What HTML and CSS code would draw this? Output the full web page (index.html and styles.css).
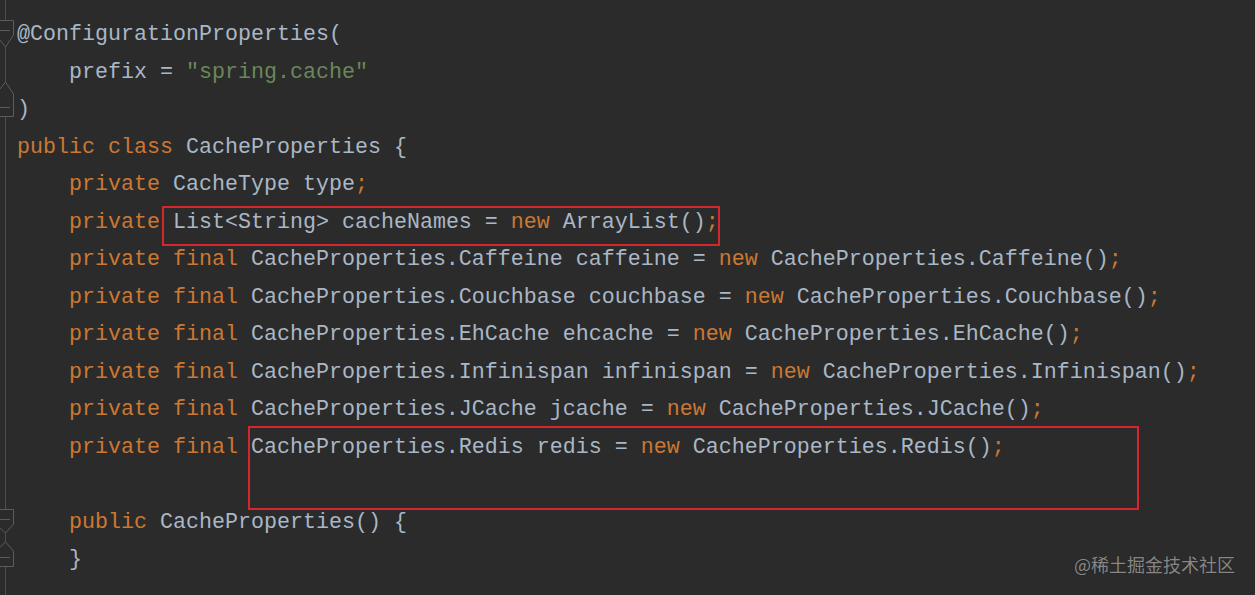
FILE: index.html
```html
<!DOCTYPE html>
<html lang="en">

<head>
    <meta charset="UTF-8">
    <title>CacheProperties.java</title>
    <link rel="stylesheet" href="styles.css">
</head>

<body>

    <div class="editor">
        <div class="gutter">
            <svg width="17" height="595" viewBox="0 0 17 595">
                <line x1="5.5" y1="0" x2="5.5" y2="595" class="guide" />
                <!-- fold start: annotation -->
                <path d="M-4 20.5 H13.5 V35 L5.5 47 L-4 35 Z" class="fold" />
                <line x1="0" y1="30.5" x2="10" y2="30.5" class="fold-minus" />
                <!-- fold end: annotation -->
                <path d="M-4 116.5 H13.5 V94 L5.5 82 L-4 94 Z" class="fold" />
                <line x1="0" y1="107.5" x2="10" y2="107.5" class="fold-minus" />
                <!-- fold start: constructor -->
                <path d="M-4 509.5 H13.5 V524 L5.5 533 L-4 524 Z" class="fold" />
                <line x1="0" y1="519.5" x2="10" y2="519.5" class="fold-minus" />
                <!-- fold end: constructor -->
                <path d="M-4 566.5 H13.5 V551 L5.5 542 L-4 551 Z" class="fold" />
                <line x1="0" y1="557.5" x2="10" y2="557.5" class="fold-minus" />
            </svg>
        </div>

        <div class="code">
            <div class="line">@ConfigurationProperties(</div>
            <div class="line">    prefix = <span class="str">"spring.cache"</span></div>
            <div class="line">)</div>
            <div class="line"><span class="kw">public class</span> CacheProperties {</div>
            <div class="line">    <span class="kw">private</span> CacheType type<span class="kw">;</span></div>
            <div class="line">    <span class="kw">private</span> List&lt;String&gt; cacheNames = <span class="kw">new</span> ArrayList()<span class="kw">;</span></div>
            <div class="line">    <span class="kw">private final</span> CacheProperties.Caffeine caffeine = <span class="kw">new</span> CacheProperties.Caffeine()<span class="kw">;</span></div>
            <div class="line">    <span class="kw">private final</span> CacheProperties.Couchbase couchbase = <span class="kw">new</span> CacheProperties.Couchbase()<span class="kw">;</span></div>
            <div class="line">    <span class="kw">private final</span> CacheProperties.EhCache ehcache = <span class="kw">new</span> CacheProperties.EhCache()<span class="kw">;</span></div>
            <div class="line">    <span class="kw">private final</span> CacheProperties.Infinispan infinispan = <span class="kw">new</span> CacheProperties.Infinispan()<span class="kw">;</span></div>
            <div class="line">    <span class="kw">private final</span> CacheProperties.JCache jcache = <span class="kw">new</span> CacheProperties.JCache()<span class="kw">;</span></div>
            <div class="line">    <span class="kw">private final</span> CacheProperties.Redis redis = <span class="kw">new</span> CacheProperties.Redis()<span class="kw">;</span></div>
            <div class="line"> </div>
            <div class="line">    <span class="kw">public</span> CacheProperties() {</div>
            <div class="line">    }</div>
        </div>

        <div class="highlight highlight-names"></div>
        <div class="highlight highlight-redis"></div>

        <div class="watermark">@稀土掘金技术社区</div>
    </div>

</body>

</html>
```

FILE: styles.css
```css
html,
body {
    margin: 0;
    background: #2b2b2b;
}

.editor {
    position: relative;
    display: flex;
    width: 1255px;
    height: 595px;
    overflow: hidden;
    background: #2b2b2b;
}

.gutter {
    flex: 0 0 17px;
}

.gutter svg {
    display: block;
}

.guide {
    stroke: #4d4d4d;
    stroke-width: 1;
}

.fold {
    fill: #2b2b2b;
    stroke: #5c5c5c;
    stroke-width: 1;
}

.fold-minus {
    stroke: #5c5c5c;
    stroke-width: 1;
}

.code {
    padding-top: 16px;
    font-family: "Liberation Mono", "DejaVu Sans Mono", monospace;
    font-size: 21.67px;
    color: #a9b7c6;
}

.line {
    height: 37.5px;
    line-height: 37.5px;
    white-space: pre;
}

.kw {
    color: #cc7832;
}

.str {
    color: #6a8759;
}

.highlight {
    position: absolute;
    border: 2px solid #d5262e;
    box-sizing: border-box;
}

.highlight-names {
    left: 162px;
    top: 206px;
    width: 558px;
    height: 40px;
}

.highlight-redis {
    left: 248px;
    top: 426px;
    width: 891px;
    height: 84px;
}

.watermark {
    position: absolute;
    right: 20px;
    top: 553px;
    font-family: "Noto Sans CJK SC", "Noto Sans", sans-serif;
    font-size: 18px;
    line-height: 22px;
    color: #878787;
    text-shadow: 0 0 1px #1e1e1e;
}
```
